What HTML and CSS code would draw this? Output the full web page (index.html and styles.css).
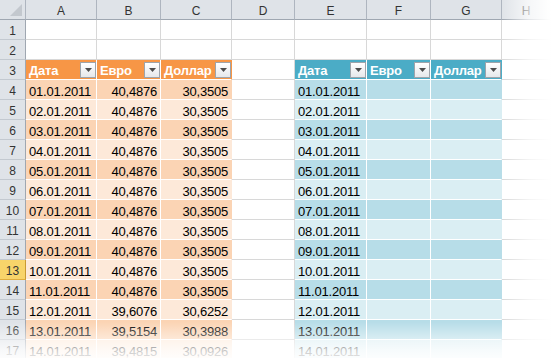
FILE: index.html
```html
<!DOCTYPE html>
<html lang="ru">
<head>
<meta charset="utf-8">
<title>Excel tables</title>
<link rel="stylesheet" href="styles.css">
</head>
<body>
<div class="sheet">
  <div class="grid">
    <div class="c ch corner"><span class="tri"></span></div>
    <div class="c ch">A</div><div class="c ch">B</div><div class="c ch">C</div><div class="c ch">D</div>
    <div class="c ch">E</div><div class="c ch">F</div><div class="c ch">G</div><div class="c ch last">H</div>

    <div class="c rh">1</div><div class="c"></div><div class="c"></div><div class="c"></div><div class="c"></div><div class="c"></div><div class="c"></div><div class="c"></div><div class="c"></div>
    <div class="c rh">2</div><div class="c"></div><div class="c"></div><div class="c"></div><div class="c"></div><div class="c"></div><div class="c"></div><div class="c"></div><div class="c"></div>

    <div class="c rh">3</div>
    <div class="c o th"><span>Дата</span><span class="fb"><svg width="7" height="4" viewBox="0 0 7 4"><path d="M0 0h7L3.5 4z" fill="#4d4d4d"/></svg></span></div>
    <div class="c o th"><span>Евро</span><span class="fb"><svg width="7" height="4" viewBox="0 0 7 4"><path d="M0 0h7L3.5 4z" fill="#4d4d4d"/></svg></span></div>
    <div class="c o th end"><span>Доллар</span><span class="fb"><svg width="7" height="4" viewBox="0 0 7 4"><path d="M0 0h7L3.5 4z" fill="#4d4d4d"/></svg></span></div>
    <div class="c"></div>
    <div class="c b th"><span>Дата</span><span class="fb"><svg width="7" height="4" viewBox="0 0 7 4"><path d="M0 0h7L3.5 4z" fill="#4d4d4d"/></svg></span></div>
    <div class="c b th"><span>Евро</span><span class="fb"><svg width="7" height="4" viewBox="0 0 7 4"><path d="M0 0h7L3.5 4z" fill="#4d4d4d"/></svg></span></div>
    <div class="c b th end"><span>Доллар</span><span class="fb"><svg width="7" height="4" viewBox="0 0 7 4"><path d="M0 0h7L3.5 4z" fill="#4d4d4d"/></svg></span></div>
    <div class="c"></div>

    <div class="c rh">4</div><div class="c o d">01.01.2011</div><div class="c o d num">40,4876</div><div class="c o d num end">30,3505</div><div class="c"></div><div class="c b d">01.01.2011</div><div class="c b d"></div><div class="c b d end"></div><div class="c"></div>
    <div class="c rh">5</div><div class="c o l">02.01.2011</div><div class="c o l num">40,4876</div><div class="c o l num end">30,3505</div><div class="c"></div><div class="c b l">02.01.2011</div><div class="c b l"></div><div class="c b l end"></div><div class="c"></div>
    <div class="c rh">6</div><div class="c o d">03.01.2011</div><div class="c o d num">40,4876</div><div class="c o d num end">30,3505</div><div class="c"></div><div class="c b d">03.01.2011</div><div class="c b d"></div><div class="c b d end"></div><div class="c"></div>
    <div class="c rh">7</div><div class="c o l">04.01.2011</div><div class="c o l num">40,4876</div><div class="c o l num end">30,3505</div><div class="c"></div><div class="c b l">04.01.2011</div><div class="c b l"></div><div class="c b l end"></div><div class="c"></div>
    <div class="c rh">8</div><div class="c o d">05.01.2011</div><div class="c o d num">40,4876</div><div class="c o d num end">30,3505</div><div class="c"></div><div class="c b d">05.01.2011</div><div class="c b d"></div><div class="c b d end"></div><div class="c"></div>
    <div class="c rh">9</div><div class="c o l">06.01.2011</div><div class="c o l num">40,4876</div><div class="c o l num end">30,3505</div><div class="c"></div><div class="c b l">06.01.2011</div><div class="c b l"></div><div class="c b l end"></div><div class="c"></div>
    <div class="c rh">10</div><div class="c o d">07.01.2011</div><div class="c o d num">40,4876</div><div class="c o d num end">30,3505</div><div class="c"></div><div class="c b d">07.01.2011</div><div class="c b d"></div><div class="c b d end"></div><div class="c"></div>
    <div class="c rh">11</div><div class="c o l">08.01.2011</div><div class="c o l num">40,4876</div><div class="c o l num end">30,3505</div><div class="c"></div><div class="c b l">08.01.2011</div><div class="c b l"></div><div class="c b l end"></div><div class="c"></div>
    <div class="c rh">12</div><div class="c o d">09.01.2011</div><div class="c o d num">40,4876</div><div class="c o d num end">30,3505</div><div class="c"></div><div class="c b d">09.01.2011</div><div class="c b d"></div><div class="c b d end"></div><div class="c"></div>
    <div class="c rh sel">13</div><div class="c o l">10.01.2011</div><div class="c o l num">40,4876</div><div class="c o l num end">30,3505</div><div class="c"></div><div class="c b l">10.01.2011</div><div class="c b l"></div><div class="c b l end"></div><div class="c"></div>
    <div class="c rh">14</div><div class="c o d">11.01.2011</div><div class="c o d num">40,4876</div><div class="c o d num end">30,3505</div><div class="c"></div><div class="c b d">11.01.2011</div><div class="c b d"></div><div class="c b d end"></div><div class="c"></div>
    <div class="c rh">15</div><div class="c o l">12.01.2011</div><div class="c o l num">39,6076</div><div class="c o l num end">30,6252</div><div class="c"></div><div class="c b l">12.01.2011</div><div class="c b l"></div><div class="c b l end"></div><div class="c"></div>
    <div class="c rh">16</div><div class="c o d">13.01.2011</div><div class="c o d num">39,5154</div><div class="c o d num end">30,3988</div><div class="c"></div><div class="c b d">13.01.2011</div><div class="c b d"></div><div class="c b d end"></div><div class="c"></div>
    <div class="c rh">17</div><div class="c o l">14.01.2011</div><div class="c o l num">39,4815</div><div class="c o l num end">30,0926</div><div class="c"></div><div class="c b l">14.01.2011</div><div class="c b l"></div><div class="c b l end"></div><div class="c"></div>
  </div>
  <div class="fade-r"></div>
  <div class="fade-b"></div>
</div>
</body>
</html>
```

FILE: styles.css
```css
html, body {
  margin: 0;
  padding: 0;
  background: #ffffff;
}

.sheet {
  position: relative;
  width: 551px;
  height: 358px;
  overflow: hidden;
  font-family: "Liberation Sans", Arial, sans-serif;
}

.grid {
  display: grid;
  grid-template-columns: 26px 71px 64px 71px 63px 72px 64px 71px 1fr;
  grid-auto-rows: 20px;
}

.c {
  box-sizing: border-box;
  height: 20px;
  border-right: 1px solid #d8d8d8;
  border-bottom: 1px solid #d8d8d8;
  font-size: 13px;
  line-height: 15px;
  padding: 4px 3px 0 3px;
  color: #000;
  white-space: nowrap;
  overflow: hidden;
  letter-spacing: -0.2px;
}

.ch {
  background: #dfe3e8;
  border-right-color: #aeb5bf;
  border-bottom-color: #9fa7b1;
  text-align: center;
  font-size: 12px;
  color: #333;
  letter-spacing: 0;
}

.ch.last {
  border-right-color: transparent;
}

.corner {
  position: relative;
}

.tri {
  position: absolute;
  right: 3px;
  bottom: 3px;
  width: 0;
  height: 0;
  border-left: 12px solid transparent;
  border-bottom: 12px solid #c3c8ce;
}

.rh {
  background: #dfe3e8;
  border-right-color: #9fa7b1;
  border-bottom-color: #c3c9d0;
  text-align: center;
  font-size: 12px;
  color: #333;
  padding-left: 0;
  padding-right: 0;
  letter-spacing: 0;
}

.rh.sel {
  background: #f8d46a;
  border-bottom-color: #e0ad3e;
  border-right-color: #c99a32;
}

/* table cells */
.o, .b {
  border-right-color: #ffffff;
  border-bottom-color: #ffffff;
}

.end {
  border-right-color: transparent;
}

.th {
  display: flex;
  align-items: center;
  padding: 0 0 0 3px;
  color: #ffffff;
  font-weight: bold;
}

.th span:first-child {
  padding-top: 2px;
}

.o.th { background: #f79646; }
.o.d { background: #fbd4b4; }
.o.l { background: #fde9d9; }

.b.th { background: #4bacc6; }
.b.d { background: #b7dde8; }
.b.l { background: #daeef3; }

.num {
  text-align: right;
}

.fb {
  margin-left: auto;
  box-sizing: border-box;
  width: 16px;
  height: 16px;
  border: 1px solid #9ea4ab;
  background: linear-gradient(#ffffff, #e6e8eb);
  display: flex;
  align-items: center;
  justify-content: center;
  flex: none;
}

.fb svg {
  display: block;
  margin-top: 1px;
}

.fade-r {
  position: absolute;
  top: 0;
  right: 0;
  width: 50px;
  height: 100%;
  background: linear-gradient(to right, rgba(255,255,255,0), rgba(255,255,255,0.7) 55%, #ffffff);
}

.fade-b {
  position: absolute;
  left: 0;
  bottom: 0;
  width: 100%;
  height: 36px;
  background: linear-gradient(to bottom, rgba(255,255,255,0), rgba(255,255,255,0.45) 45%, rgba(255,255,255,0.78) 80%, rgba(255,255,255,0.9));
}
```
